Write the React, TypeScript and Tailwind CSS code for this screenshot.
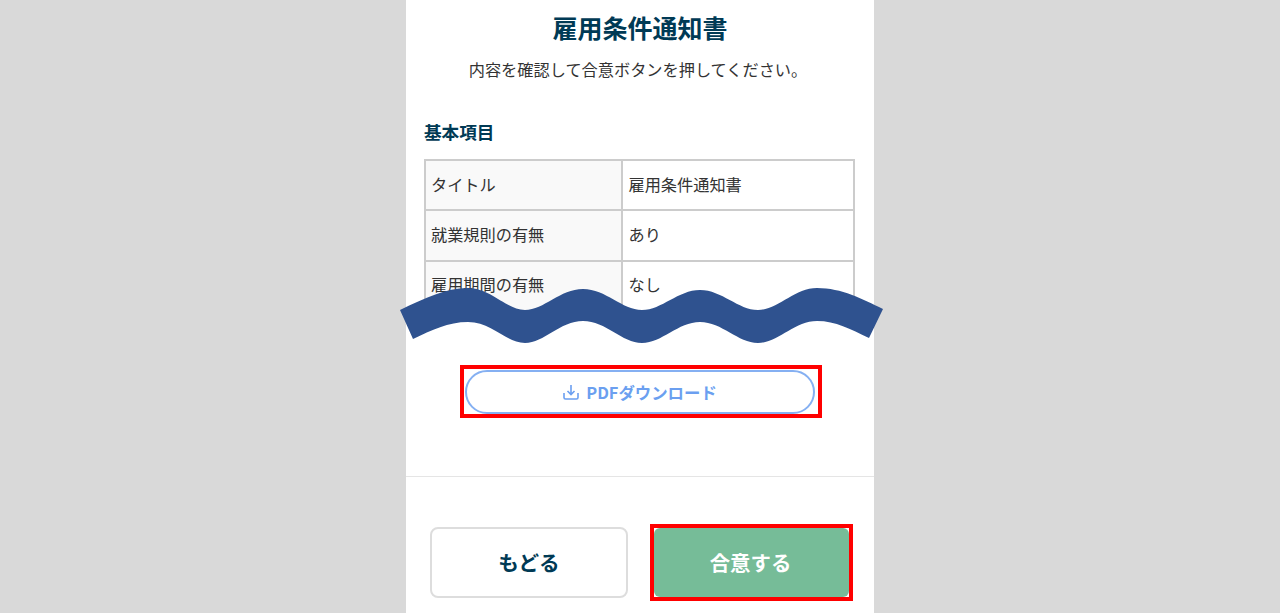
const font = { fontFamily: '"Noto Sans CJK JP", "Noto Sans", sans-serif' };

const rows = [
  { label: "タイトル", value: "雇用条件通知書", height: "h-[48px]", pad: "pb-px" },
  { label: "就業規則の有無", value: "あり", height: "h-[51px]", pad: "pb-[3px]" },
  { label: "雇用期間の有無", value: "なし", height: "h-[51px]", pad: "pb-[5px]" },
];

function Wave() {
  return (
    <svg
      className="absolute left-[390px] top-[280px] z-10"
      width="500"
      height="70"
      viewBox="390 280 500 70"
    >
      <path
        fill="#2f528f"
        d="M400 310 C425 298 447 288 467 288 C492 288 506 310 525 310 C544 310 560 289 583 289 C606 289 622 310 642 310 C662 310 678 290 700 290 C722 290 738 310 758 310 C778 310 794 288 817 288 C842 288 862 299 883 309 L869 338 C850 329 836 321 817 321 C794 321 778 343 758 343 C738 343 722 322 700 322 C678 322 662 343 642 343 C622 343 606 321 583 321 C560 321 544 343 525 343 C506 343 492 322 468 322 C448 322 432 330 413 339 Z"
      />
    </svg>
  );
}

function DownloadIcon() {
  return (
    <svg width="16" height="16" viewBox="0 0 16 16" fill="none" stroke="#6b9ff0" strokeWidth="1.6">
      <path d="M8 1v9M4.500 7 8 10.500 11.500 7" />
      <path d="M1 9v4.500a1.500 1.500 0 0 0 1.500 1.500h11a1.500 1.500 0 0 0 1.500-1.500V9" />
    </svg>
  );
}

export default function App() {
  return (
    <div className="relative h-[613px] w-full overflow-hidden bg-[#d9d9d9]" style={font}>
      <Wave />
      <div className="mx-auto flex h-[613px] w-[468px] flex-col bg-white">
        <div className="px-[18px]">
          <h1 className="pt-[10px] text-center text-[25px] font-bold leading-[34px] text-[#003a55]">
            雇用条件通知書
          </h1>
          <p className="mt-[13px] pr-[4px] text-center text-[16.2px] leading-[24px] text-[#333333]">
            内容を確認して合意ボタンを押してください。
          </p>
          <h2 className="mt-[39px] text-[17.6px] font-bold leading-[24px] text-[#003a55]">基本項目</h2>
          <div className="mt-[15px] h-[152px] w-[431px] border-x-2 border-t-2 border-[#cccccc]">
            {rows.map((row, i) => (
              <div key={row.label} className={`flex ${row.height} ${i > 0 ? "border-t-2 border-[#cccccc]" : ""}`}>
                <div className={`flex w-[197px] items-center border-r-2 border-[#cccccc] bg-[#f9f9f9] pl-[5px] text-[16.2px] text-[#333333] ${row.pad}`}>
                  {row.label}
                </div>
                <div className={`flex flex-1 items-center pl-[5.500px] text-[16.2px] text-[#333333] ${row.pad}`}>{row.value}</div>
              </div>
            ))}
          </div>
        </div>

        <div className="mt-[54px] flex pl-[54px]">
          <div className="border-4 border-[#ff0000] pl-px pr-[3px] pt-px">
            <button className="flex h-[44px] w-[350px] items-center justify-center gap-[7px] rounded-full border-2 border-[#85b0f2] bg-white text-[16.4px] font-bold text-[#6b9ff0]">
              <DownloadIcon />
              PDFダウンロード
            </button>
          </div>
        </div>

        <div className="mt-[58px] border-t border-[#e5e5e5]" />

        <div className="mt-[47px] flex items-center pl-[24px]">
          <button className="h-[71px] w-[198px] rounded-lg border-2 border-[#dddddd] bg-white text-[20.6px] font-bold text-[#003a55]">
            もどる
          </button>
          <div className="ml-[22px] border-4 border-[#ff0000] bg-white">
            <button className="block h-[69px] w-[195px] rounded-[6px] bg-[#76bc98] pr-[2px] text-[20.4px] font-bold text-white">
              合意する
            </button>
          </div>
        </div>
      </div>
    </div>
  );
}
